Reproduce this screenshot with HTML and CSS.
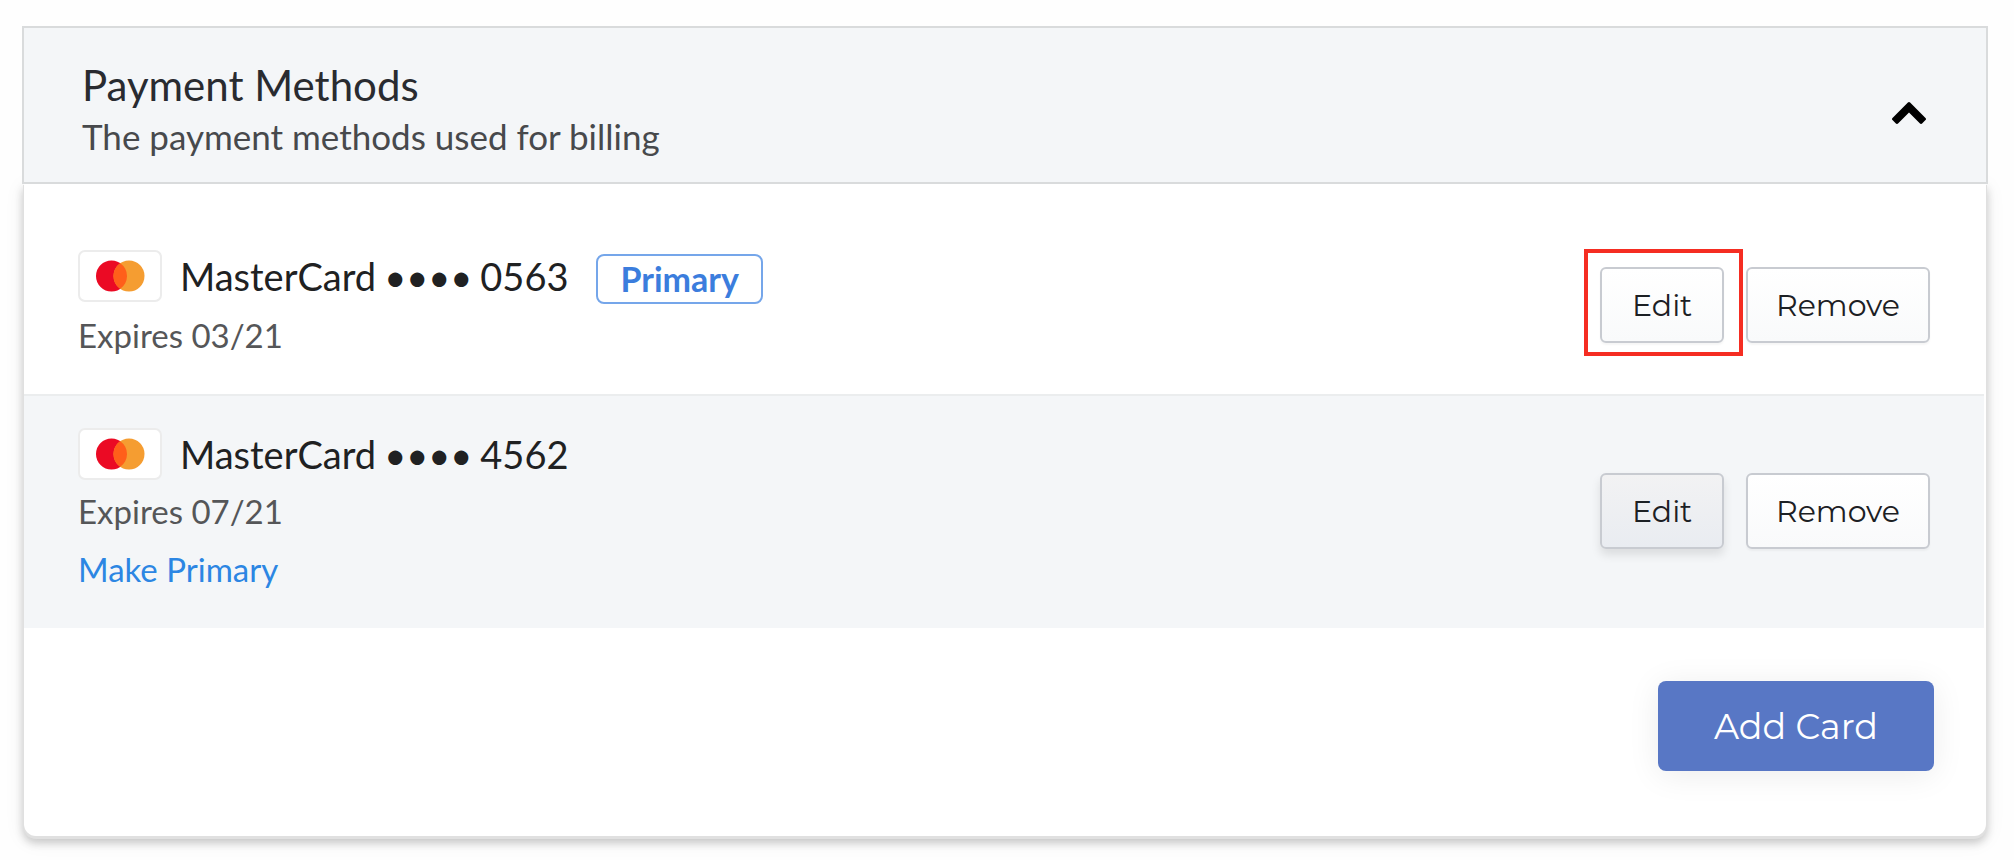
FILE: index.html
```html
<!DOCTYPE html>
<html lang="en">
<head>
<meta charset="utf-8">
<title>Payment Methods</title>
<link rel="stylesheet" href="styles.css">
</head>
<body>
<main class="panel">
  <header class="panel-header">
    <div>
      <h1 class="panel-title">Payment Methods</h1>
      <p class="panel-subtitle">The payment methods used for billing</p>
    </div>
    <button class="toggle" type="button" aria-label="Collapse payment methods" aria-expanded="true">
      <svg class="chevron" viewBox="0 0 34 22" aria-hidden="true"><path d="M15.900.6a1.500 1.500 0 0 1 2.200 0L33.500 16a1.500 1.500 0 0 1 0 2.100L30.100 21.500a1.500 1.500 0 0 1-2.100 0L17 10.500 6 21.500a1.500 1.500 0 0 1-2.100 0L.5 18.100a1.500 1.500 0 0 1 0-2.100Z"/></svg>
    </button>
  </header>
  <section class="panel-body">
    <ul class="cards">
      <li class="card">
        <div>
          <div class="card-line">
            <svg class="brand" viewBox="0 0 84 52" aria-hidden="true"><rect class="brand-frame" x="1" y="1" width="82" height="50" rx="6"/><circle cx="33.500" cy="26" r="15.500" fill="#eb0a24"/><circle cx="51" cy="26" r="15.500" fill="#f59d31"/><path d="M42.250 13.200a15.500 15.500 0 0 1 0 25.600a15.500 15.500 0 0 1 0-25.600Z" fill="#ff5f1a"/></svg>
            <span class="card-name"><span>MasterCard</span> <span>••••</span> <span>0563</span></span>
            <span class="badge">Primary</span>
          </div>
          <p class="expiry">Expires 03/21</p>
        </div>
        <div class="actions">
          <span class="highlight"><button class="btn" type="button">Edit</button></span>
          <button class="btn" type="button">Remove</button>
        </div>
      </li>
      <li class="card card-shaded">
        <div>
          <div class="card-line">
            <svg class="brand" viewBox="0 0 84 52" aria-hidden="true"><rect class="brand-frame" x="1" y="1" width="82" height="50" rx="6"/><circle cx="33.500" cy="26" r="15.500" fill="#eb0a24"/><circle cx="51" cy="26" r="15.500" fill="#f59d31"/><path d="M42.250 13.200a15.500 15.500 0 0 1 0 25.600a15.500 15.500 0 0 1 0-25.600Z" fill="#ff5f1a"/></svg>
            <span class="card-name"><span>MasterCard</span> <span>••••</span> <span>4562</span></span>
          </div>
          <p class="expiry">Expires 07/21</p>
          <a class="make-primary" href="#">Make Primary</a>
        </div>
        <div class="actions">
          <button class="btn btn-active" type="button">Edit</button>
          <button class="btn" type="button">Remove</button>
        </div>
      </li>
    </ul>
    <footer class="panel-footer">
      <button class="btn-add" type="button">Add Card</button>
    </footer>
  </section>
</main>
</body>
</html>
```
FILE: styles.css
```css
* {
  box-sizing: border-box;
}

body {
  margin: 0;
  background: #fefefe;
  font-family: Lato, "Liberation Sans", sans-serif;
  color: #202122;
}

h1, p, ul {
  margin: 0;
  padding: 0;
}

.panel {
  margin: 26px 26px 24px 22px;
}

.panel-header {
  position: relative;
  z-index: 1;
  display: flex;
  justify-content: space-between;
  align-items: center;
  padding: 30px 60px 22px 58px;
  border: 2px solid #d9dbdc;
  background: #f4f6f8;
}

.panel-title {
  font-size: 42px;
  font-weight: 400;
  line-height: 54px;
  color: #292b30;
}

.panel-subtitle {
  font-size: 35px;
  line-height: 48px;
  color: #47494c;
}

.toggle {
  display: flex;
  padding: 8px 0 0;
  border: 0;
  background: none;
}

.chevron {
  width: 34px;
  height: 22px;
}

.panel-body {
  margin: 0 2px;
  padding-top: 34px;
  border-radius: 0 0 12px 12px;
  background: #fff;
  box-shadow: 0 2px 0 1px #e0e0e0, 0 6px 8px 1px #00000030, 0 4px 20px 2px #0000000f;
}

.cards {
  list-style: none;
}

.card {
  display: flex;
  justify-content: space-between;
  align-items: center;
  margin-right: 2px;
  padding: 32px 54px 30px;
}

.card-shaded {
  border-top: 2px solid #ebedee;
  background: #f4f6f8;
}

.card-line {
  display: flex;
  align-items: flex-start;
}

.brand {
  width: 84px;
  height: 52px;
}

.brand-frame {
  fill: #fff;
  stroke: #ececec;
  stroke-width: 2;
}

.card-name {
  display: flex;
  gap: 8px;
  margin: 0 28px 0 18px;
  font-size: 38px;
  line-height: 52px;
}

.badge {
  margin-top: 4px;
  padding: 0 22px;
  border: 2px solid #75a6ea;
  border-radius: 8px;
  background: #fff;
  color: #3b7ddd;
  font-size: 34px;
  font-weight: 700;
  line-height: 46px;
}

.expiry {
  margin-top: 2px;
  font-size: 33px;
  line-height: 58px;
  color: #555658;
}

.make-primary {
  display: block;
  font-size: 33px;
  line-height: 58px;
  color: #2c86e3;
  text-decoration: none;
}

.actions {
  display: flex;
  gap: 22px;
  margin-bottom: 4px;
}

.btn {
  min-width: 124px;
  height: 76px;
  padding: 0 28px;
  border: 2px solid #c8cbd1;
  border-radius: 6px;
  background: linear-gradient(#fff, #f9fafb);
  box-shadow: 0 2px 2px #0000000a;
  color: #1c2024;
  font-family: Montserrat, Inter, sans-serif;
  font-size: 30px;
}

.btn-active {
  background: linear-gradient(#f2f2f3, #e9ecf1);
  box-shadow: 0 6px 10px #0000001a;
}

.highlight {
  position: relative;
}

.highlight::after {
  content: "";
  position: absolute;
  inset: -18px -19px -13px -16px;
  border: 4px solid #f52d22;
  pointer-events: none;
}

.panel-footer {
  display: flex;
  justify-content: flex-end;
  padding: 53px 52px 65px;
}

.btn-add {
  height: 90px;
  padding: 0 56px;
  border: 0;
  border-radius: 8px;
  background: #5877c5;
  box-shadow: 0 4px 32px #00000014;
  color: #fff;
  font-family: Montserrat, Inter, sans-serif;
  font-size: 35px;
}
```
